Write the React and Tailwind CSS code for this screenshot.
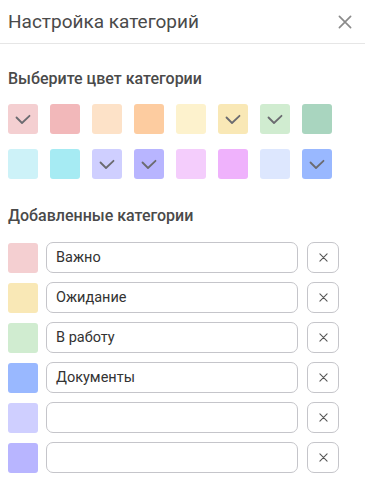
import React from "react";

const palette = [
  ["#f4cfd1", true],
  ["#f2b8ba", false],
  ["#fde2c8", false],
  ["#fdcca0", false],
  ["#fdf2cd", false],
  ["#f9e8b6", true],
  ["#d0ecd0", true],
  ["#a9d5bf", false],
  ["#cdf2f8", false],
  ["#a6ebf3", false],
  ["#cfcfff", true],
  ["#b8b5ff", true],
  ["#f4cdfc", false],
  ["#efb2fc", false],
  ["#dde7fe", false],
  ["#99b8ff", true],
];

const cats = [
  ["#f4cfd1", "Важно"],
  ["#f9e8b6", "Ожидание"],
  ["#d0ecd0", "В работу"],
  ["#99b8ff", "Документы"],
  ["#cfcfff", ""],
  ["#b8b5ff", ""],
];

function Check() {
  return (
    <svg width="16" height="11" viewBox="0 0 16 11" fill="none" className="mt-[1px]">
      <path d="M1.5 3.5 L7 9 L14.5 1.8" stroke="#6b6b70" strokeWidth="1.8" strokeLinecap="round" strokeLinejoin="round" />
    </svg>
  );
}

function SmallX({ size = 9, color = "#555", w = 1.3 }) {
  return (
    <svg width={size} height={size} viewBox="0 0 10 10" fill="none">
      <path d="M1 1 L9 9 M9 1 L1 9" stroke={color} strokeWidth={w} strokeLinecap="round" />
    </svg>
  );
}

export default function App() {
  return (
    <div className="w-[365px] h-[481px] bg-white overflow-hidden" style={{ fontFamily: "Roboto, 'Noto Sans', sans-serif" }}>
      <div className="h-[44px] flex items-center justify-between pl-2 pr-[13px] border-b border-[#e6e6e6]">
        <div className="text-[19px] text-[#4a4a4a] leading-none">Настройка категорий</div>
        <SmallX size={14} color="#8a8a8a" w={1.2} />
      </div>
      <div className="px-2">
        <div className="mt-[25px] text-[16px] leading-5 font-medium text-[#4a4a4a]">Выберите цвет категории</div>
        <div className="mt-[15px] grid grid-cols-[repeat(8,30px)] gap-x-3 gap-y-[15px]">
          {palette.map(([c, checked], i) => (
            <div key={i} className="w-[30px] h-[30px] rounded-[3px] flex items-center justify-center" style={{ backgroundColor: c }}>
              {checked && <Check />}
            </div>
          ))}
        </div>
        <div className="mt-[27px] text-[16px] leading-5 font-medium text-[#4a4a4a]">Добавленные категории</div>
        <div className="mt-[16px] flex flex-col gap-[9px]">
          {cats.map(([c, name], i) => (
            <div key={i} className="flex items-center h-[31px]">
              <div className="w-[30px] h-[30px] rounded-[3px]" style={{ backgroundColor: c }} />
              <div className="ml-2 w-[252px] h-[31px] border border-[#c5c5ca] rounded-[7px] flex items-center pl-[9px] text-[14.5px] text-[#333]">
                {name}
              </div>
              <div className="ml-[9px] w-[32px] h-[31px] border border-[#c5c5ca] rounded-[7px] flex items-center justify-center">
                <SmallX size={9} color="#555" w={1.2} />
              </div>
            </div>
          ))}
        </div>
      </div>
    </div>
  );
}
